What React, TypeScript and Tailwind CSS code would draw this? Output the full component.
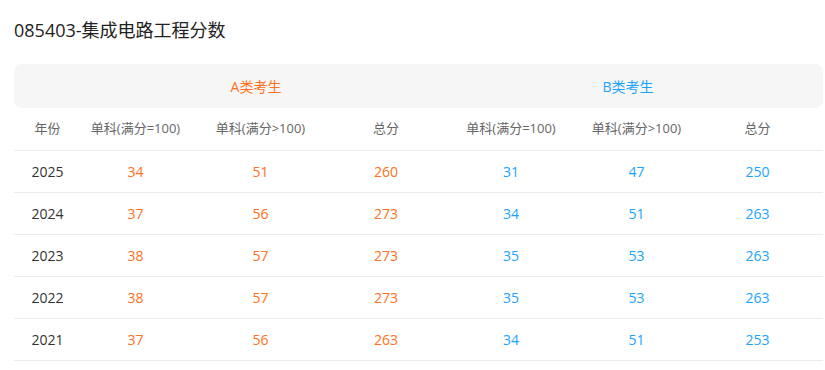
const rows = [
  { year: "2025", a: ["34", "51", "260"], b: ["31", "47", "250"] },
  { year: "2024", a: ["37", "56", "273"], b: ["34", "51", "263"] },
  { year: "2023", a: ["38", "57", "273"], b: ["35", "53", "263"] },
  { year: "2022", a: ["38", "57", "273"], b: ["35", "53", "263"] },
  { year: "2021", a: ["37", "56", "263"], b: ["34", "51", "253"] },
];

const heads = ["单科(满分=100)", "单科(满分>100)", "总分"];

// column widths picked so the centered text lands where the screenshot has it
const grid = "grid grid-cols-[67px_109px_141px_110px_140px_111px_131px]";

export default function App() {
  return (
    <div
      className="w-[825px] h-[370px] bg-white px-[14px] pt-[17px] overflow-hidden"
      style={{ fontFamily: '"Open Sans", "Noto Sans CJK SC", sans-serif' }}
    >
      <h1 className="text-[18px] leading-[26px] text-[#222]">085403-集成电路工程分数</h1>

      <div className="mt-[21px] w-[809px]">
        {/* group header */}
        <div className="flex h-[44px] items-center rounded-lg bg-[#f6f6f6] text-[14px]">
          <span className="w-[484px] text-center text-[#ff7020]">A类考生</span>
          <span className="w-[260px] text-center text-[#1aa3ff]">B类考生</span>
        </div>

        {/* column header */}
        <div className={`${grid} h-[43px] items-center border-b border-[#ebebeb] text-[13px] text-[#666]`}>
          <span className="text-center">年份</span>
          {[...heads, ...heads].map((h, i) => (
            <span key={i} className="text-center whitespace-nowrap">
              {h}
            </span>
          ))}
        </div>

        {rows.map((r) => (
          <div
            key={r.year}
            className={`${grid} h-[42px] items-center border-b border-[#ebebeb] text-[14px]`}
          >
            <span className="text-center text-[#333]">{r.year}</span>
            {r.a.map((v, i) => (
              <span key={"a" + i} className="text-center text-[#ff7020]">
                {v}
              </span>
            ))}
            {r.b.map((v, i) => (
              <span key={"b" + i} className="text-center text-[#1aa3ff]">
                {v}
              </span>
            ))}
          </div>
        ))}
      </div>
    </div>
  );
}
